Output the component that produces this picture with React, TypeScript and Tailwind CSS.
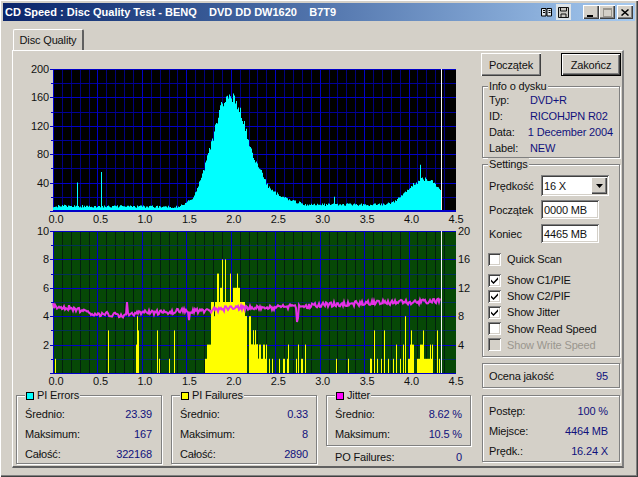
const font = "font-['Liberation_Sans',Arial,sans-serif]";

// small seeded generator so the noisy curves stay the same between runs
function makeRand(seed: number) {
  let s = seed;
  return () => {
    s = (s * 16807) % 2147483647;
    return s / 2147483647;
  };
}

function lerp(points: number[][], x: number) {
  for (let i = 1; i < points.length; i++) {
    if (x <= points[i][0]) {
      const [x0, y0] = points[i - 1];
      const [x1, y1] = points[i];
      return y0 + ((y1 - y0) * (x - x0)) / (x1 - x0);
    }
  }
  return points[points.length - 1][1];
}

const W = 403; // plot width
const H = 142; // plot height
const LEFT = 37;
const TOP = 7;
const END = 388; // data stops here
const STEP = 44.44; // px per 0.5 on the x axis

const piErrorCurve = [
  [0, 7], [1.4, 6], [1.45, 9], [1.5, 13], [1.57, 20], [1.62, 35], [1.68, 58], [1.72, 78], [1.78, 100],
  [1.82, 122], [1.87, 145], [1.92, 160], [1.96, 165], [2.02, 158], [2.09, 138], [2.14, 118], [2.2, 88],
  [2.28, 66], [2.39, 36], [2.53, 21], [2.7, 13], [2.83, 9], [3.0, 9], [3.7, 9], [3.8, 13], [3.95, 27],
  [4.03, 39], [4.14, 45], [4.25, 40], [4.32, 32], [4.34, 28],
];

function piErrorPath() {
  const rand = makeRand(77);
  let d = '';
  for (let i = 0; i < END; i++) {
    const v = i / 89.55;
    const base = lerp(piErrorCurve, v);
    let value = base + (rand() - 0.5) * (3 + base * 0.08);
    if (i === 24) value = 40;
    if (i === 48) value = 55;
    if (i === 367) value = 65;
    if (i === 281) value = 20;
    const h = Math.max(2, (value / 200) * H);
    d += `M${LEFT + i} ${TOP + H}V${(TOP + H - h).toFixed(1)}h1V${TOP + H}z`;
  }
  return d;
}

// [from px, to px, value] in screen x, taken off the picture
const failureBars: number[][] = [
  [55, 56, 1], [108, 109, 3], [136, 137, 2], [137, 138, 4], [138, 139, 3], [157, 158, 3], [159, 160, 1], [169, 170, 1], [174, 175, 3],
  [205, 207, 1], [207, 211, 2], [211, 214, 5], [214, 215, 4], [215, 217, 5], [217, 219, 7], [219, 220, 5], [220, 222, 6], [222, 223, 8],
  [223, 224, 5], [224, 225, 5], [225, 226, 8], [226, 227, 5], [227, 228, 5], [228, 230, 5], [230, 231, 7], [231, 233, 5], [233, 237, 6],
  [237, 238, 7], [238, 240, 6], [240, 242, 5], [242, 245, 5], [245, 247, 4], [249, 251, 4], [251, 253, 2], [253, 254, 3], [255, 256, 3],
  [256, 258, 2], [258, 260, 1], [260, 261, 2], [261, 263, 1], [263, 264, 2], [264, 267, 1],
  [240, 243, 5], [243, 246, 3], [245, 247, 4], [249, 250, 3], [250, 251, 3], [251, 258, 2], [253, 254, 3], [258, 259, 1], [255, 256, 3],
  [257, 258, 2], [259, 260, 2], [263, 265, 1], [264, 265, 2], [266, 267, 2], [269, 270, 1], [272, 273, 1], [279, 280, 1], [283, 285, 1],
  [287, 288, 1], [288, 289, 2], [296, 297, 1], [298, 299, 2], [301, 303, 1], [305, 306, 2], [336, 337, 1], [348, 349, 1], [370, 371, 1],
  [370, 372, 1], [374, 375, 3], [377, 378, 1], [381, 382, 1], [384, 385, 3], [388, 389, 1], [393, 394, 1], [396, 397, 2], [400, 401, 1],
  [403, 404, 2], [405, 406, 4], [408, 413, 1], [410, 414, 2], [411, 412, 3], [417, 423, 1], [420, 423, 2], [423, 424, 3], [424, 433, 1],
  [430, 431, 2], [432, 433, 2], [437, 438, 3], [439, 440, 1],
];

const jitterCurve = [
  [0, 305.5], [0.2, 308], [0.5, 314], [0.8, 315], [1.0, 313], [1.5, 311], [1.8, 310], [2.0, 308], [2.3, 308], [2.6, 307],
  [3.0, 305], [3.5, 303], [4.0, 302], [4.34, 301],
];

function jitterPoints() {
  const rand = makeRand(4242);
  const out: string[] = [];
  for (let i = 0; i < END; i += 1) {
    const v = i / 89.55;
    let y = lerp(jitterCurve, v) + (rand() - 0.5) * 5;
    if (i === 74) y = 302;
    if (i === 136) y = 320;
    if (i === 244) y = 322;
    if (i === 245) y = 318;
    out.push(`${LEFT + i},${(y - 224).toFixed(1)}`);
  }
  return out.join(' ');
}

function Grid({ minor, minorH }: { minor: string; minorH: string }) {
  const lines = [];
  for (let i = 0; i <= 45; i++) {
    if (i % 5 === 0) continue;
    const x = Math.round(LEFT + (i * STEP) / 5) + 0.5;
    lines.push(<path key={`v${i}`} d={`M${x} ${TOP}V${TOP + H}`} stroke={minor} />);
  }
  for (let i = 1; i < 10; i += 2) {
    const y = Math.round(TOP + (i * H) / 10) + 0.5;
    lines.push(<path key={`h${i}`} d={`M${LEFT} ${y}H${LEFT + W}`} stroke={minorH} />);
  }
  for (let i = 0; i < 9; i++) {
    const x = Math.round(LEFT + i * STEP);
    lines.push(<path key={`mv${i}`} d={`M${x + 0.5} ${TOP}V${TOP + H}`} stroke="#0000c8" />);
  }
  for (let i = 0; i <= 5; i++) {
    const y = Math.round(TOP + (i * H) / 5) + 0.5;
    lines.push(<path key={`mh${i}`} d={`M${LEFT - 3} ${y}H${LEFT + W}`} stroke="#0000c8" />);
  }
  for (let i = 1; i < 10; i += 2) {
    const y = Math.round(TOP + (i * H) / 10) + 0.5;
    lines.push(<path key={`t${i}`} d={`M${LEFT - 2} ${y}H${LEFT}`} stroke="#0000c8" />);
  }
  return <>{lines}</>;
}

function XLabels() {
  const labels = ['0.0', '0.5', '1.0', '1.5', '2.0', '2.5', '3.0', '3.5', '4.0', '4.5'];
  return (
    <>
      {labels.map((l, i) => (
        <text key={l} x={LEFT + 3 + i * STEP} y={161} textAnchor="middle">
          {l}
        </text>
      ))}
    </>
  );
}

function YLabels({ items, x, anchor }: { items: string[]; x: number; anchor: 'end' | 'start' }) {
  return (
    <>
      {items.map((l, i) =>
        l ? (
          <text key={l + i} x={x} y={TOP + 4 + (i * H) / 5} textAnchor={anchor}>
            {l}
          </text>
        ) : null,
      )}
    </>
  );
}

function ErrorChart() {
  return (
    <svg width="460" height="165" className="mb-[-3px] block fill-[#111] text-[11px]">
      <rect x={LEFT} y={TOP} width={W} height={H} fill="#000000" />
      <Grid minor="#000080" minorH="#000098" />
      <path d={piErrorPath()} fill="#00ffff" />
      <path d={`M${LEFT + END + 0.5} ${TOP}V${TOP + H}`} stroke="#f4f4f4" />
      <path d={`M${LEFT} ${TOP + H - 0.5}H${LEFT + W}`} stroke="#0000c8" />
      <YLabels items={['200', '160', '120', '80', '40', '']} x={LEFT - 4} anchor="end" />
      <XLabels />
    </svg>
  );
}

function FailureChart() {
  return (
    <svg width="460" height="165" className="mb-[-3px] block fill-[#111] text-[11px]">
      <rect x={LEFT} y={TOP} width={W} height={H} fill="#064806" />
      <Grid minor="#02200e" minorH="#02305a" />
      {failureBars.map(([a, b, v], i) => (
        <rect key={i} x={a - 16} y={TOP + H - v * 14.2} width={b - a} height={v * 14.2} fill="#ffff00" />
      ))}
      <polyline points={jitterPoints()} fill="none" stroke="#e632e6" strokeWidth="2" />
      <path d={`M${LEFT + END + 0.5} ${TOP}V${TOP + H}`} stroke="#f4f4f4" />
      <YLabels items={['10', '8', '6', '4', '2', '']} x={LEFT - 4} anchor="end" />
      <YLabels items={['20', '16', '12', '8', '4', '']} x={LEFT + W + 2} anchor="start" />
      <XLabels />
    </svg>
  );
}

const etched = 'relative border border-[#808080] shadow-[1px_1px_0_#fff,inset_1px_1px_0_#fff]';

function Group({ title, swatch, className, children }: { title?: string; swatch?: string; className: string; children: React.ReactNode }) {
  return (
    <div className={`${etched} ${className}`}>
      {title && (
        <div className={`absolute top-[-7px] flex h-[13px] items-center gap-[3px] bg-[#d4d0c8] px-[1px] leading-[13px] ${swatch ? 'left-[8px]' : 'left-[5px]'}`}>
          {swatch && <span className={`h-[8px] w-[8px] border border-black ${swatch}`} />}
          <span>{title}</span>
        </div>
      )}
      {children}
    </div>
  );
}

function StatRow({ label, value, className }: { label: string; value: string; className: string }) {
  return (
    <div className={`flex items-center justify-between ${className}`}>
      <span>{label}</span>
      <span className="text-[#10107c]">{value}</span>
    </div>
  );
}

function InfoRow({ label, value }: { label: string; value: string }) {
  return (
    <div className="flex h-[16px] items-center whitespace-nowrap">
      <span className="w-[41px]">{label}</span>
      <span className="text-[#10107c]">{value}</span>
    </div>
  );
}

const sunken =
  'shadow-[inset_1px_1px_0_#808080,inset_-1px_-1px_0_#fff,inset_2px_2px_0_#404040,inset_-2px_-2px_0_#d4d0c8]';
const raised =
  'shadow-[inset_1px_1px_0_#fff,inset_-1px_-1px_0_#404040,inset_-2px_-2px_0_#808080]';

function Check({ label, checked, disabled }: { label: string; checked?: boolean; disabled?: boolean }) {
  return (
    <div className={`ml-[-1px] flex h-[16px] items-center gap-[6px] ${disabled ? 'text-[#9a968e]' : ''}`}>
      <span className={`flex h-[13px] w-[13px] items-center justify-center ${disabled ? 'bg-[#d4d0c8]' : 'bg-white'} ${sunken}`}>
        {checked && (
          <svg width="9" height="9" viewBox="0 0 9 9">
            <path d="M1 3.5 3.5 6 8 1.2V3.4L3.5 8 1 5.6z" fill="#000" />
          </svg>
        )}
      </span>
      <span>{label}</span>
    </div>
  );
}

function FieldRow({ label, value }: { label: string; value: string }) {
  return (
    <div className="flex items-center">
      <span className="w-[52px]">{label}</span>
      <span className={`flex h-[19px] w-[58px] items-center bg-white pl-[3px] ${sunken}`}>{value}</span>
    </div>
  );
}

function CaptionButton({ children, className }: { children: React.ReactNode; className?: string }) {
  return (
    <span className={`flex h-[14px] w-[16px] items-center justify-center bg-[#d4d0c8] ${raised} ${className ?? ''}`}>{children}</span>
  );
}

function TitleBar() {
  return (
    <div className="flex h-[18px] items-center bg-gradient-to-r from-[#0a246a] to-[#a6caf0] pl-[2px] pr-[2px]">
      <span className="whitespace-pre text-[11px] font-bold tracking-normal text-white">
        {'CD Speed : Disc Quality Test - BENQ    DVD DD DW1620    B7T9'}
      </span>
      <div className="ml-auto flex items-center">
        <span className="mr-[3px] flex h-[14px] w-[13px] items-center justify-center">
          <svg width="11" height="10" viewBox="0 0 11 10">
            <path d="M.5 1.5h4.5v7.500H.5zM6 1.500h4.500v7.500H6z" fill="#dfe6ee" stroke="#000" />
            <path d="M2 3.500h2M2 5.500h2M7.500 3.500h2M7.500 5.500h2" stroke="#000" />
          </svg>
        </span>
        <span className="mr-[12px] flex h-[16px] w-[15px] items-center justify-center bg-[#dde3e8]">
          <svg width="11" height="11" viewBox="0 0 11 11">
            <path d="M.500.500h10v10h-10z" fill="#c9c7c2" stroke="#111" />
            <path d="M2.500.500v3.500h6V.500M3 10.500V7h5v3.500" fill="none" stroke="#111" />
          </svg>
        </span>
        <CaptionButton>
          <span className="mr-[2px] mt-[7px] h-[2px] w-[6px] bg-black" />
        </CaptionButton>
        <CaptionButton>
          <span className="h-[9px] w-[9px] border border-t-2 border-[#9a968e]" />
        </CaptionButton>
        <CaptionButton className="ml-[2px]">
          <svg width="8" height="7" viewBox="0 0 8 7">
            <path d="M.500.500 7.500 6.500M7.500.500.500 6.500" stroke="#000" strokeWidth="1.500" />
          </svg>
        </CaptionButton>
      </div>
    </div>
  );
}

export default function App() {
  return (
    <div className={`h-[477px] w-[638px] overflow-hidden bg-[#d4d0c8] p-[3px] text-[11px] leading-[14px] tracking-[-0.15px] text-[#111] ${font} shadow-[inset_1px_1px_0_#fff,inset_-1px_-1px_0_#404040,inset_-2px_-2px_0_#808080]`}>
      <TitleBar />

      {/* Tab strip */}
      <div className="flex h-[29px] items-end pl-[10px]">
        <div className="flex h-[21px] w-[71px] items-center justify-center rounded-t-[2px] border-l border-r-2 border-t border-l-white border-r-[#606060] border-t-white pb-[1px]">
          Disc Quality
        </div>
      </div>

      <div className="ml-[9px] flex h-[418px] w-[612px] gap-[5px] border-b-2 border-l border-r-2 border-t border-b-[#606060] border-l-white border-r-[#808080] border-t-white pl-[3px] pt-[2px]">
        {/* Charts and statistics */}
        <div className="flex w-[460px] flex-col pt-[9px]">
          <ErrorChart />
          <FailureChart />
          <div className="mt-[9px] flex gap-[9px]">
            <Group title="PI Errors" swatch="bg-[#00ffff]" className="flex h-[69px] w-[146px] flex-col pl-[8px] pr-[9px] pt-[8px]">
              <StatRow label="Średnio:" value="23.39" className="h-[20px]" />
              <StatRow label="Maksimum:" value="167" className="h-[20px]" />
              <StatRow label="Całość:" value="322168" className="h-[19px]" />
            </Group>
            <Group title="PI Failures" swatch="bg-[#ffff00]" className="flex h-[69px] w-[146px] flex-col px-[8px] pt-[8px]">
              <StatRow label="Średnio:" value="0.33" className="h-[20px]" />
              <StatRow label="Maksimum:" value="8" className="h-[20px]" />
              <StatRow label="Całość:" value="2890" className="h-[19px]" />
            </Group>
            <div className="flex w-[145px] flex-col">
              <Group title="Jitter" swatch="bg-[#ff00ff]" className="flex h-[51px] flex-col px-[8px] pt-[8px]">
                <StatRow label="Średnio:" value="8.62 %" className="h-[20px]" />
                <StatRow label="Maksimum:" value="10.5 %" className="h-[20px]" />
              </Group>
              <StatRow label="PO Failures:" value="0" className="mt-[2px] h-[18px] px-[9px]" />
            </div>
          </div>
        </div>

        {/* Right column */}
        <div className="flex w-[140px] flex-col">
          <div className="flex justify-between">
            <button className={`h-[23px] w-[60px] bg-[#d4d0c8] ${raised}`}>Początek</button>
            <button className={`h-[23px] w-[60px] border border-black bg-[#d4d0c8] ${raised}`}>Zakończ</button>
          </div>

          <Group title="Info o dysku" className="mx-[1px] mt-[10px] flex h-[72px] flex-col px-[6px] pt-[5px]">
            <InfoRow label="Typ:" value="DVD+R" />
            <InfoRow label="ID:" value="RICOHJPN R02" />
            <InfoRow label="Data:" value="1 December 2004" />
            <InfoRow label="Label:" value="NEW" />
          </Group>

          <Group title="Settings" className="mx-[1px] mt-[6px] flex h-[193px] flex-col px-[6px] pt-[10px]">
            <div className="flex items-center">
              <span className="w-[52px]">Prędkość</span>
              <span className={`flex h-[21px] w-[68px] items-center justify-between bg-white pl-[3px] pr-[2px] ${sunken}`}>
                16 X
                <span className={`flex h-[17px] w-[16px] items-center justify-center bg-[#d4d0c8] ${raised}`}>
                  <svg width="7" height="4" viewBox="0 0 7 4">
                    <path d="M0 0h7L3.500 4z" fill="#000" />
                  </svg>
                </span>
              </span>
            </div>
            <div className="mt-[4px] flex flex-col gap-[5px]">
              <FieldRow label="Początek" value="0000 MB" />
              <FieldRow label="Koniec" value="4465 MB" />
            </div>
            <div className="mt-[8px]">
              <Check label="Quick Scan" />
            </div>
            <div className="mt-[5px] flex flex-col gap-[0.2px]">
              <Check label="Show C1/PIE" checked />
              <Check label="Show C2/PIF" checked />
              <Check label="Show Jitter" checked />
              <Check label="Show Read Speed" />
              <Check label="Show Write Speed" disabled />
            </div>
          </Group>

          <Group className="mx-[1px] mt-[6px] flex h-[25px] items-center px-[6px]">
            <StatRow label="Ocena jakość" value="95" className="w-[119px]" />
          </Group>

          <Group className="mx-[1px] mt-[7px] flex h-[67px] flex-col px-[6px] pt-[5px]">
            <StatRow label="Postęp:" value="100 %" className="h-[20px] w-[119px]" />
            <StatRow label="Miejsce:" value="4464 MB" className="h-[20px] w-[119px]" />
            <StatRow label="Prędk.:" value="16.24 X" className="h-[20px] w-[119px]" />
          </Group>
        </div>
      </div>
    </div>
  );
}
